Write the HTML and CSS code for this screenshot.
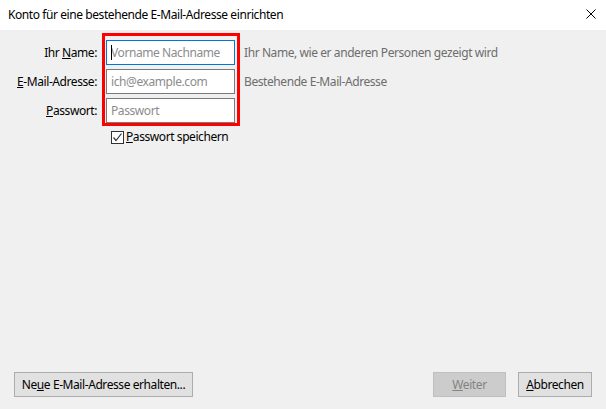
FILE: index.html
```html
<!DOCTYPE html>
<html lang="de">
<head>
<meta charset="utf-8">
<title>Konto einrichten</title>
<link rel="stylesheet" href="styles.css">
</head>
<body>
<div class="window">
  <div class="titlebar">
    <span class="title">Konto für eine bestehende E-Mail-Adresse einrichten</span>
    <svg class="close" width="10" height="10" viewBox="0 0 10 10"><path d="M0.5 0.5 L9.5 9.5 M9.5 0.5 L0.5 9.5" stroke="#000" stroke-width="1" fill="none"/></svg>
  </div>
  <div class="content">
    <div class="form">
      <div class="labels">
        <label class="label">Ihr <u>N</u>ame:</label>
        <label class="label"><u>E</u>-Mail-Adresse:</label>
        <label class="label"><u>P</u>asswort:</label>
      </div>
      <div class="highlight">
        <span class="field focused"><input class="input" type="text" placeholder="Vorname Nachname"><span class="caret"></span></span>
        <span class="field"><input class="input" type="text" placeholder="ich@example.com"></span>
        <span class="field"><input class="input" type="password" placeholder="Passwort"></span>
      </div>
      <div class="hints">
        <div class="hint">Ihr Name, wie er anderen Personen gezeigt wird</div>
        <div class="hint">Bestehende E-Mail-Adresse</div>
        <div class="hint"></div>
      </div>
    </div>
    <div class="remember">
      <span class="checkbox"><svg width="11" height="11" viewBox="0 0 11 11"><path d="M1.5 5.5 L4 8.5 L9.5 1.5" stroke="#333" stroke-width="1.2" fill="none"/></svg></span>
      <span class="remember-text"><u>P</u>asswort speichern</span>
    </div>
  </div>
  <div class="footer">
    <button class="btn btn-new">Ne<u>u</u>e E-Mail-Adresse erhalten...</button>
    <div class="actions">
      <button class="btn btn-disabled"><u>W</u>eiter</button>
      <button class="btn btn-cancel"><u>A</u>bbrechen</button>
    </div>
  </div>
</div>
</body>
</html>
```
FILE: styles.css
```css
html, body {
  margin: 0;
  padding: 0;
}
body {
  font-family: "Noto Sans", "Open Sans", sans-serif;
  font-size: 12px;
  letter-spacing: -0.42px;
  color: #000;
  background: #f0f0f0;
}
.window {
  height: 409px;
  display: flex;
  flex-direction: column;
}
.titlebar {
  height: 30px;
  background: #fff;
  display: flex;
  align-items: center;
  justify-content: space-between;
  padding: 0 10px 0 8px;
  flex-shrink: 0;
}
.title {
  font-size: 12px;
  line-height: 16px;
  margin-top: -1px;
}
.close {
  display: block;
  margin-top: -2px;
}
.content {
  padding-top: 3px;
  flex: 1;
}
.form {
  display: flex;
  align-items: flex-start;
}
.labels, .hints {
  display: flex;
  flex-direction: column;
  gap: 4px;
  padding-top: 7px;
}
.labels {
  width: 97px;
}
.label {
  height: 25px;
  line-height: 25px;
  text-align: right;
  white-space: nowrap;
}
.highlight {
  margin-left: 5px;
  border: 3px solid #ff0000;
  padding: 4px 2px 0 1px;
  display: flex;
  flex-direction: column;
  gap: 4px;
}
.field {
  position: relative;
  display: block;
  width: 129px;
  height: 25px;
}
.input {
  box-sizing: border-box;
  width: 129px;
  height: 25px;
  margin: 0;
  border: 1px solid #7a7a7a;
  background: #fff;
  padding: 0 4px;
  font-family: "Noto Sans", "Open Sans", sans-serif;
  font-size: 12px;
  letter-spacing: -0.42px;
  color: #000;
  outline: none;
  display: block;
}
.input::placeholder {
  color: #8c8c8c;
  opacity: 1;
}
.focused .input {
  border-color: #0078d7;
}
.caret {
  position: absolute;
  left: 5px;
  top: 5px;
  width: 1px;
  height: 15px;
  background: #000;
}
.hints {
  margin-left: 4px;
}
.hint {
  height: 25px;
  line-height: 25px;
  color: #6d6d6d;
  white-space: nowrap;
}
.remember {
  display: flex;
  align-items: center;
  margin-left: 111px;
  margin-top: 4px;
  height: 14px;
}
.checkbox {
  box-sizing: border-box;
  width: 13px;
  height: 13px;
  border: 1px solid #333;
  background: #fff;
  display: flex;
  align-items: center;
  justify-content: center;
}
.checkbox svg {
  display: block;
}
.remember-text {
  margin-left: 2px;
  line-height: 14px;
}
.footer {
  display: flex;
  justify-content: space-between;
  align-items: flex-end;
  padding: 0 14px 12px 14px;
}
.actions {
  display: flex;
  gap: 12px;
}
.btn {
  box-sizing: border-box;
  height: 25px;
  border: 1px solid #adadad;
  background: #e1e1e1;
  font-family: "Noto Sans", "Open Sans", sans-serif;
  font-size: 12px;
  letter-spacing: -0.42px;
  color: #000;
  padding: 0 4px;
  margin: 0;
  line-height: 23px;
  white-space: nowrap;
}
.btn-new {
  width: 179px;
}
.btn-disabled {
  width: 73px;
  background: #cccccc;
  border-color: #bfbfbf;
  color: #838383;
}
.btn-cancel {
  width: 74px;
}
```
